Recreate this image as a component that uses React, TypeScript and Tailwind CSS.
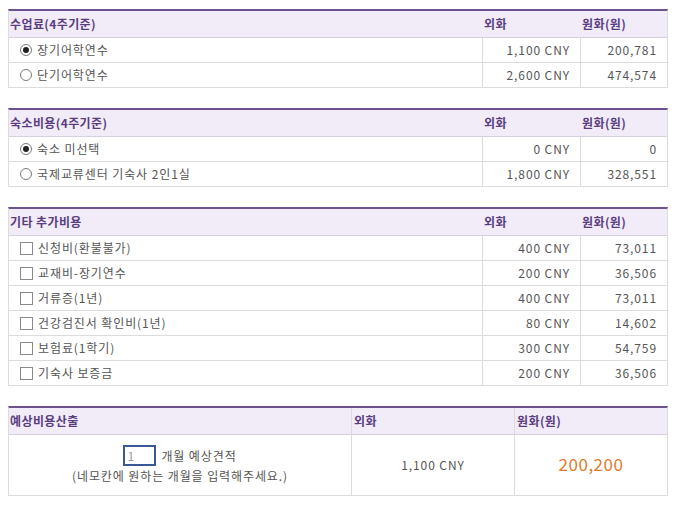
const font = { fontFamily: '"Noto Sans CJK KR", "Noto Sans", sans-serif' };

type Row = { label: string; fx: string; krw: string; checked?: boolean };

const Radio = ({ checked }: { checked?: boolean }) => (
  <span className="flex items-center justify-center w-[12px] h-[12px] rounded-full border border-[#7a7a7a] bg-white shrink-0">
    {checked && <span className="w-[6px] h-[6px] rounded-full bg-[#222]" />}
  </span>
);

const Check = () => (
  <span className="w-[13px] h-[13px] border border-[#8a8a8a] bg-white shrink-0" />
);

const Section = ({ title, rows, kind }: { title: string; rows: Row[]; kind: "radio" | "check" }) => (
  <div className="w-[660px] ml-2 border-t-2 border-t-[#6d5290] border-x border-x-[#dcdcdc] text-[12px]">
    <div className="grid grid-cols-[473px_98px_1fr] h-[27px] bg-[#f1ecf8] border-b border-[#d6d0de] font-bold text-[#5a3d80] tracking-[0.4px]">
      <div className="flex items-center pl-[1px]">{title}</div>
      <div className="flex items-center pl-[2px]">외화</div>
      <div className="flex items-center pl-[2px]">원화(원)</div>
    </div>
    {rows.map((r) => (
      <div key={r.label} className="grid grid-cols-[473px_98px_1fr] h-[25px] border-b border-[#dcdcdc] text-[#555] tracking-[0.9px]">
        <div className="flex items-center gap-[5px] pl-[11px]">
          {kind === "radio" ? <Radio checked={r.checked} /> : <Check />}
          <span>{r.label}</span>
        </div>
        <div className="flex items-center justify-end pr-[10px] border-l border-[#dcdcdc]">{r.fx}</div>
        <div className="flex items-center justify-end pr-[10px] border-l border-[#dcdcdc]">{r.krw}</div>
      </div>
    ))}
  </div>
);

export default function App() {
  return (
    <div className="w-[675px] h-[505px] bg-white pt-[9px]" style={font}>
      <Section
        title="수업료(4주기준)"
        kind="radio"
        rows={[
          { label: "장기어학연수", fx: "1,100 CNY", krw: "200,781", checked: true },
          { label: "단기어학연수", fx: "2,600 CNY", krw: "474,574" },
        ]}
      />
      <div className="h-5" />
      <Section
        title="숙소비용(4주기준)"
        kind="radio"
        rows={[
          { label: "숙소 미선택", fx: "0 CNY", krw: "0", checked: true },
          { label: "국제교류센터 기숙사 2인1실", fx: "1,800 CNY", krw: "328,551" },
        ]}
      />
      <div className="h-5" />
      <Section
        title="기타 추가비용"
        kind="check"
        rows={[
          { label: "신청비(환불불가)", fx: "400 CNY", krw: "73,011" },
          { label: "교재비-장기연수", fx: "200 CNY", krw: "36,506" },
          { label: "거류증(1년)", fx: "400 CNY", krw: "73,011" },
          { label: "건강검진서 확인비(1년)", fx: "80 CNY", krw: "14,602" },
          { label: "보험료(1학기)", fx: "300 CNY", krw: "54,759" },
          { label: "기숙사 보증금", fx: "200 CNY", krw: "36,506" },
        ]}
      />
      <div className="h-5" />
      <div className="w-[660px] ml-2 border-t-2 border-t-[#6d5290] border-x border-x-[#dcdcdc] border-b border-b-[#dcdcdc] text-[12px]">
        <div className="grid grid-cols-[342px_163px_1fr] h-[27px] bg-[#f1ecf8] border-b border-[#d6d0de] font-bold text-[#5a3d80] tracking-[0.4px]">
          <div className="flex items-center pl-[1px]">예상비용산출</div>
          <div className="flex items-center pl-[2px] border-l border-[#dcdcdc]">외화</div>
          <div className="flex items-center pl-[2px] border-l border-[#dcdcdc]">원화(원)</div>
        </div>
        <div className="grid grid-cols-[342px_163px_1fr] h-[60px] text-[#555] tracking-[0.9px]">
          <div className="flex flex-col items-center justify-center gap-[1px]">
            <div className="flex items-center gap-[5px]">
              <input
                defaultValue="1"
                className="w-[33px] h-[21px] border-2 border-[#3a5896] px-[2px] text-[12px] text-[#999] outline-none"
              />
              <span>개월 예상견적</span>
            </div>
            <div>(네모칸에 원하는 개월을 입력해주세요.)</div>
          </div>
          <div className="flex items-center justify-center border-l border-[#dcdcdc]">1,100 CNY</div>
          <div className="flex items-center justify-center border-l border-[#dcdcdc] text-[17px] text-[#e07a2c] pb-[2px] tracking-[0.5px]">
            200,200
          </div>
        </div>
      </div>
    </div>
  );
}
